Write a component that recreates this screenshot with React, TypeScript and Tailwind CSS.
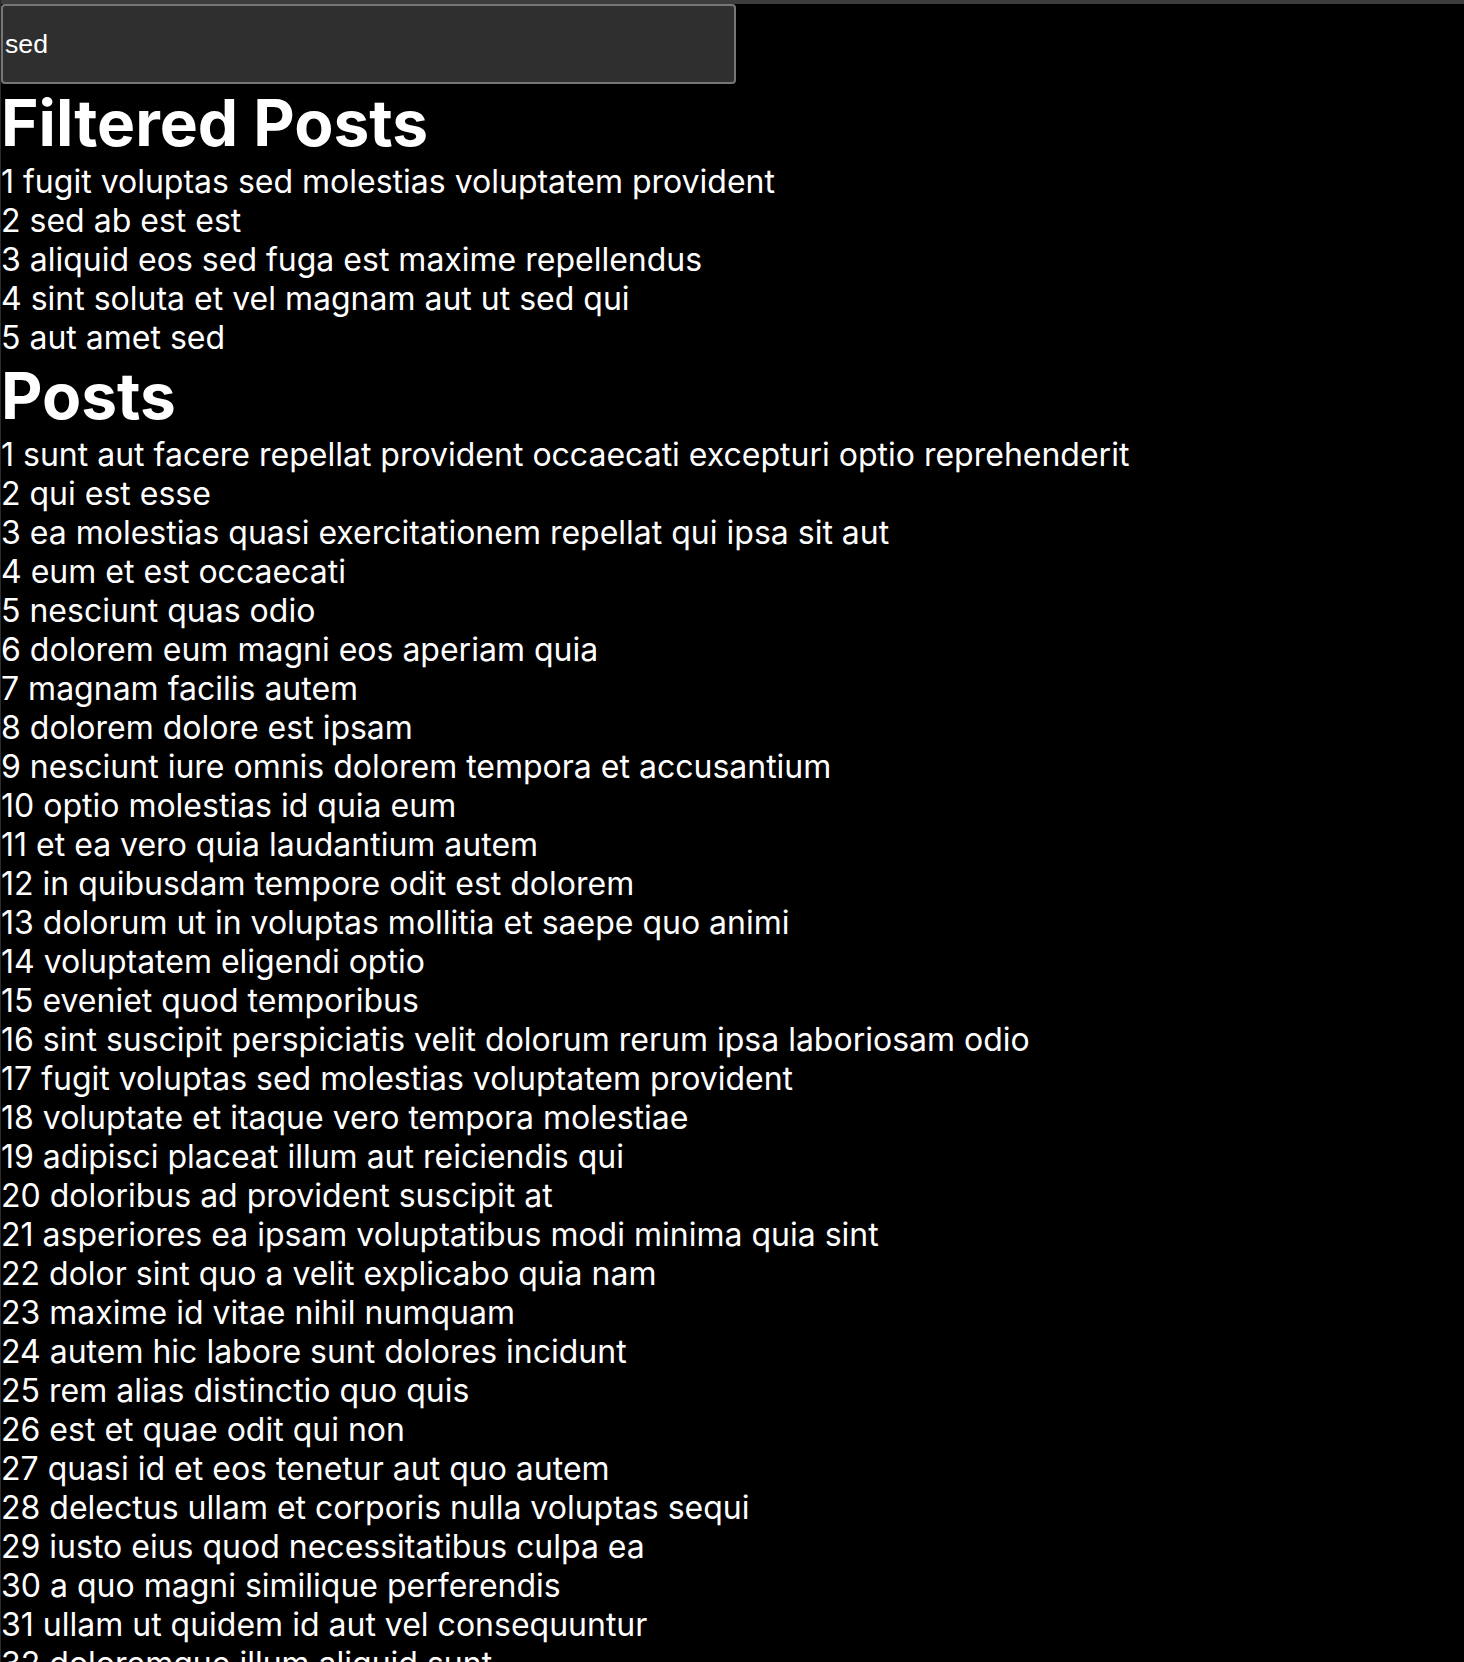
import React from 'react';

const posts = [
  'sunt aut facere repellat provident occaecati excepturi optio reprehenderit',
  'qui est esse',
  'ea molestias quasi exercitationem repellat qui ipsa sit aut',
  'eum et est occaecati',
  'nesciunt quas odio',
  'dolorem eum magni eos aperiam quia',
  'magnam facilis autem',
  'dolorem dolore est ipsam',
  'nesciunt iure omnis dolorem tempora et accusantium',
  'optio molestias id quia eum',
  'et ea vero quia laudantium autem',
  'in quibusdam tempore odit est dolorem',
  'dolorum ut in voluptas mollitia et saepe quo animi',
  'voluptatem eligendi optio',
  'eveniet quod temporibus',
  'sint suscipit perspiciatis velit dolorum rerum ipsa laboriosam odio',
  'fugit voluptas sed molestias voluptatem provident',
  'voluptate et itaque vero tempora molestiae',
  'adipisci placeat illum aut reiciendis qui',
  'doloribus ad provident suscipit at',
  'asperiores ea ipsam voluptatibus modi minima quia sint',
  'dolor sint quo a velit explicabo quia nam',
  'maxime id vitae nihil numquam',
  'autem hic labore sunt dolores incidunt',
  'rem alias distinctio quo quis',
  'est et quae odit qui non',
  'quasi id et eos tenetur aut quo autem',
  'delectus ullam et corporis nulla voluptas sequi',
  'iusto eius quod necessitatibus culpa ea',
  'a quo magni similique perferendis',
  'ullam ut quidem id aut vel consequuntur',
  'doloremque illum aliquid sunt',
];

const filtered = [
  'fugit voluptas sed molestias voluptatem provident',
  'sed ab est est',
  'aliquid eos sed fuga est maxime repellendus',
  'sint soluta et vel magnam aut ut sed qui',
  'aut amet sed',
];

export default function App() {
  const [query, setQuery] = React.useState('sed');

  return (
    <div className="h-screen overflow-hidden bg-black text-white border-l border-[#2c2c2c] font-['Inter',sans-serif]">
      <div className="h-1 bg-[#3c3c3c]" />
      <input
        value={query}
        onChange={(e) => setQuery(e.target.value)}
        className="block w-[735px] h-[80px] px-[2px] bg-[#2f2f2f] border-2 border-[#767676] rounded-[4px] text-white text-[26.67px] font-['Liberation_Sans',Arial,sans-serif] outline-none"
      />
      <h1 className="text-[64px] font-bold leading-[78px]">Filtered Posts</h1>
      <div className="text-[32px] leading-[39px]">
        {filtered.map((title, i) => (
          <div key={i}>
            {i + 1} {title}
          </div>
        ))}
      </div>
      <h1 className="text-[64px] font-bold leading-[78px]">Posts</h1>
      <div className="text-[32px] leading-[39px]">
        {posts.map((title, i) => (
          <div key={i}>
            {i + 1} {title}
          </div>
        ))}
      </div>
    </div>
  );
}
